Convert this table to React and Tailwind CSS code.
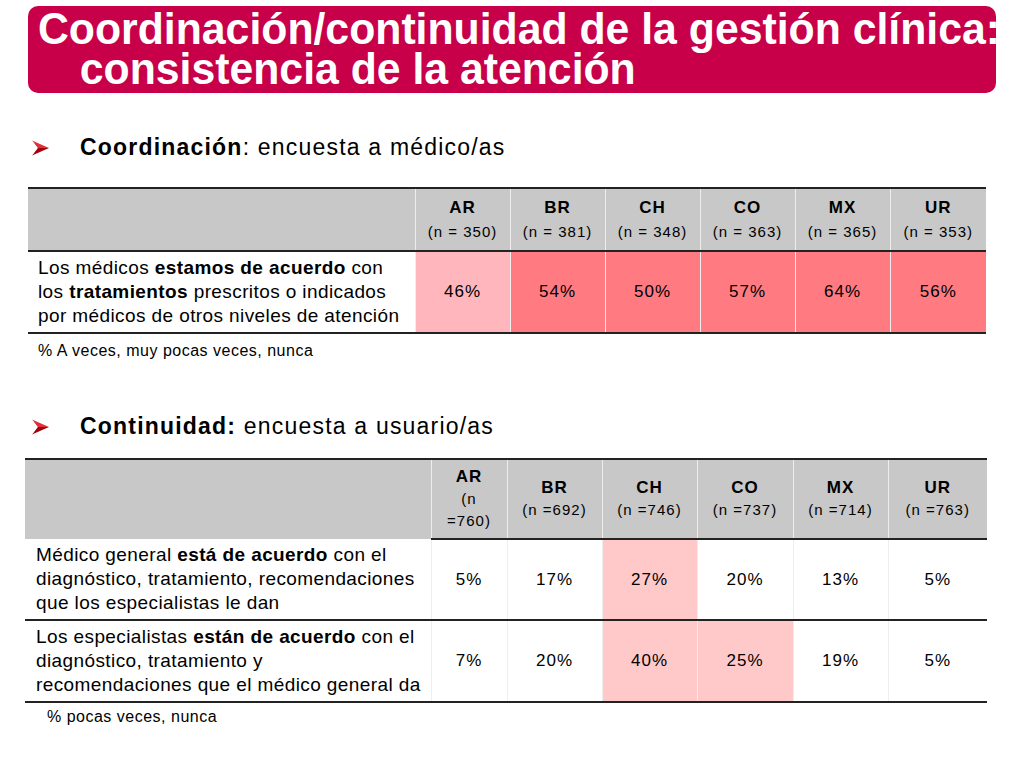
import React from 'react';

const RED = '#ff7b81';
const PINK = '#ffb7bd';
const LIGHT = '#ffc9ca';

const Arrow = () => (
  <svg width="17" height="16" viewBox="0 0 18 16" className="shrink-0">
    <polygon points="0,0 18,8 6,8" fill="#e0303a" />
    <polygon points="0,16 18,8 6,8" fill="#a50010" />
    <polygon points="0,0 6,8 0,16 3,8" fill="#ffffff" />
  </svg>
);

const Bullet = ({ bold, rest }) => (
  <div className="flex items-center pl-[32px]">
    <Arrow />
    <div className="ml-[31px] text-[23px] tracking-[1.2px] leading-none text-black whitespace-nowrap">
      <span className="font-bold">{bold}</span>{rest}
    </div>
  </div>
);

const table1 = [
  { c: 'AR', n: '(n = 350)', v: '46%', bg: PINK },
  { c: 'BR', n: '(n = 381)', v: '54%', bg: RED },
  { c: 'CH', n: '(n = 348)', v: '50%', bg: RED },
  { c: 'CO', n: '(n = 363)', v: '57%', bg: RED },
  { c: 'MX', n: '(n = 365)', v: '64%', bg: RED },
  { c: 'UR', n: '(n = 353)', v: '56%', bg: RED },
];

const widths1 = [95, 95, 95, 95, 95, 96];
const widths2 = [76, 95, 95, 96, 95, 99];

const table2Head = [
  { c: 'AR', n: ['(n', '=760)'] },
  { c: 'BR', n: ['(n =692)'] },
  { c: 'CH', n: ['(n =746)'] },
  { c: 'CO', n: ['(n =737)'] },
  { c: 'MX', n: ['(n =714)'] },
  { c: 'UR', n: ['(n =763)'] },
];

const table2Rows = [
  {
    label: [
      <>Médico general <b>está de acuerdo</b> con el</>,
      <>diagnóstico, tratamiento, recomendaciones</>,
      <>que los especialistas le dan</>,
    ],
    vals: ['5%', '17%', '27%', '20%', '13%', '5%'],
    hi: [false, false, true, false, false, false],
  },
  {
    label: [
      <>Los especialistas <b>están de acuerdo</b> con el</>,
      <>diagnóstico, tratamiento y</>,
      <>recomendaciones que el médico general da</>,
    ],
    vals: ['7%', '20%', '40%', '25%', '19%', '5%'],
    hi: [false, false, true, true, false, false],
  },
];

const Lines = ({ lines }) => lines.map((l, i) => <div key={i} className="whitespace-nowrap">{l}</div>);

export default function App() {
  return (
    <div className="w-[1024px] h-[768px] bg-white overflow-hidden" style={{ fontFamily: '"Liberation Sans", Arial, sans-serif' }}>
      <div className="pt-[6px] pl-[28px]">
        <div className="w-[968px] h-[87px] rounded-[10px] bg-[#c8004a] pl-[10px] pt-[3px]">
          <div className="text-white font-bold text-[45px] leading-[40px] whitespace-nowrap scale-x-[0.95] origin-left">
            Coordinación/continuidad de la gestión clínica:
            <div className="pl-[44px]">consistencia de la atención</div>
          </div>
        </div>
      </div>

      <div className="mt-[43px]">
        <Bullet bold="Coordinación" rest=": encuesta a médico/as" />
      </div>

      <table className="mt-[28px] ml-[28px] border-collapse table-fixed text-black" style={{ width: 958 }}>
        <colgroup>
          <col style={{ width: 387 }} />
          {widths1.map((w, i) => <col key={i} style={{ width: w }} />)}
        </colgroup>
        <thead>
          <tr className="h-[63px] bg-[#c8c8c8] border-t-2 border-b-2 border-[#222]">
            <th className="p-0"></th>
            {table1.map((h) => (
              <th key={h.c} className="p-0 border-l border-[#eeeeee] text-center align-middle">
                <div className="text-[17px] tracking-[1px] font-bold leading-[20px]">{h.c}</div>
                <div className="text-[15px] tracking-[1px] font-normal leading-[20px] mt-[4px]">{h.n}</div>
              </th>
            ))}
          </tr>
        </thead>
        <tbody>
          <tr className="h-[82px] border-b-2 border-[#222]">
            <td className="pl-[10px] pr-0 text-[19px] tracking-[0.4px] leading-[24px] align-middle">
              <Lines
                lines={[
                  <>Los médicos <b>estamos de acuerdo</b> con</>,
                  <>los <b>tratamientos</b> prescritos o indicados</>,
                  <>por médicos de otros niveles de atención</>,
                ]}
              />
            </td>
            {table1.map((h) => (
              <td key={h.c} className="text-center text-[17px] tracking-[1px] border-l border-[#eeeeee]" style={{ backgroundColor: h.bg }}>
                {h.v}
              </td>
            ))}
          </tr>
        </tbody>
      </table>
      <div className="ml-[38px] mt-[8px] text-[16px] tracking-[0.5px] leading-[18px] text-black">% A veces, muy pocas veces, nunca</div>

      <div className="mt-[55px]">
        <Bullet bold="Continuidad:" rest=" encuesta a usuario/as" />
      </div>

      <table className="mt-[20px] ml-[25px] border-collapse table-fixed text-black" style={{ width: 962 }}>
        <colgroup>
          <col style={{ width: 406 }} />
          {widths2.map((w, i) => <col key={i} style={{ width: w }} />)}
        </colgroup>
        <thead>
          <tr className="h-[80px] bg-[#c8c8c8] border-t-2 border-[#222]">
            <th className="p-0"></th>
            {table2Head.map((h) => (
              <th key={h.c} className="p-0 border-l border-[#eeeeee] border-b-2 border-b-[#222] text-center align-middle">
                <div className="text-[17px] tracking-[1px] font-bold leading-[20px]">{h.c}</div>
                {h.n.map((t) => (
                  <div key={t} className="text-[15px] tracking-[1px] font-normal leading-[20px] mt-[2px]">{t}</div>
                ))}
              </th>
            ))}
          </tr>
        </thead>
        <tbody>
          {table2Rows.map((r, ri) => (
            <tr key={ri} className={(ri === 0 ? 'h-[81px] ' : 'h-[82px] ') + 'border-b-2 border-[#222]'}>
              <td className="pl-[11px] pr-0 text-[19px] tracking-[0.4px] leading-[24px] align-middle">
                <Lines lines={r.label} />
              </td>
              {r.vals.map((v, i) => (
                <td
                  key={i}
                  className="text-center text-[17px] tracking-[1px] border-l border-[#eeeeee]"
                  style={{ backgroundColor: r.hi[i] ? LIGHT : '#ffffff' }}
                >
                  {v}
                </td>
              ))}
            </tr>
          ))}
        </tbody>
      </table>
      <div className="ml-[47px] mt-[5px] text-[16px] tracking-[0.5px] leading-[18px] text-black">% pocas veces, nunca</div>
    </div>
  );
}
